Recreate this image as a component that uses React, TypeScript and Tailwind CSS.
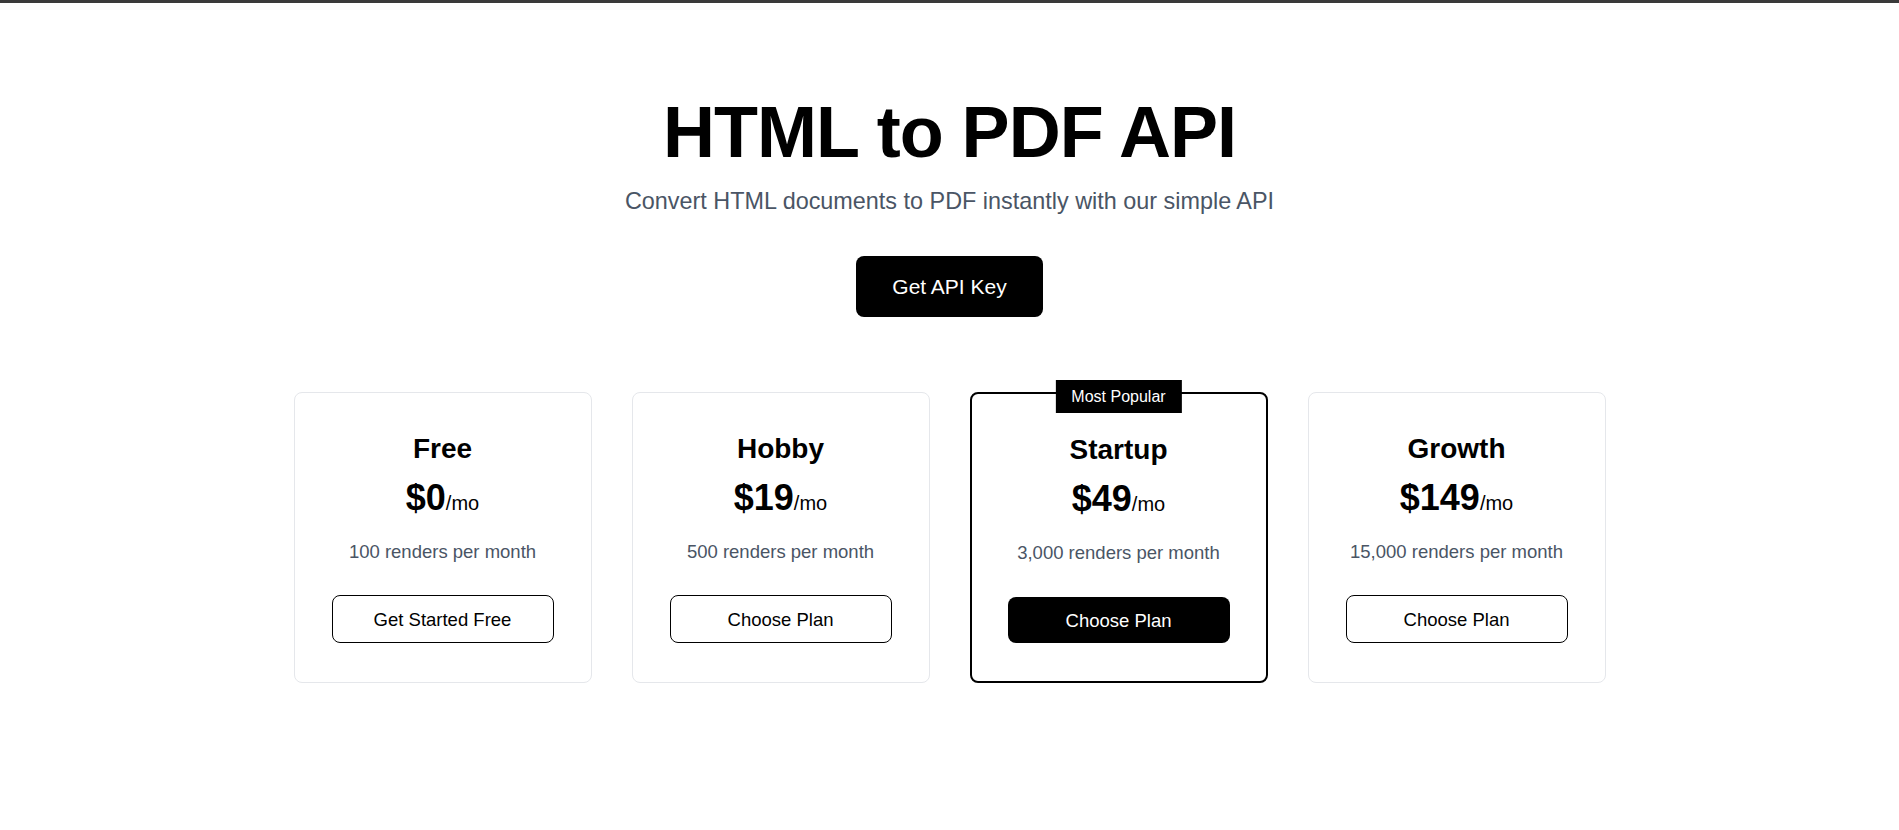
const plans = [
  { name: "Free", price: "$0", renders: "100 renders per month", cta: "Get Started Free", popular: false },
  { name: "Hobby", price: "$19", renders: "500 renders per month", cta: "Choose Plan", popular: false },
  { name: "Startup", price: "$49", renders: "3,000 renders per month", cta: "Choose Plan", popular: true },
  { name: "Growth", price: "$149", renders: "15,000 renders per month", cta: "Choose Plan", popular: false },
];

function PlanCard({ plan }: { plan: (typeof plans)[number] }) {
  return (
    <div
      className={
        plan.popular
          ? "relative flex flex-col items-center rounded-lg border-2 border-black bg-white px-[36px] pt-[39px] pb-[38px]"
          : "relative flex flex-col items-center rounded-lg border border-gray-200 bg-white px-[37px] pt-[39px] pb-[38px]"
      }
    >
      {plan.popular && (
        <span className="absolute top-[-14px] left-1/2 flex h-[33px] -translate-x-1/2 items-center bg-black px-4 text-[16px] text-white">
          Most Popular
        </span>
      )}
      <h3 className="text-[28px] leading-[34px] font-bold text-black">{plan.name}</h3>
      <div className="mt-[10px] leading-[43px] text-black">
        <span className="text-[36px] font-bold">{plan.price}</span>
        <span className="text-[20px]">/mo</span>
      </div>
      <p className="mt-[12px] text-[18.5px] leading-[27px] text-gray-600">{plan.renders}</p>
      {plan.popular ? (
        <button
          type="button"
          className="mt-[31px] h-[46px] w-full rounded-lg bg-black text-[18.5px] text-white"
        >
          {plan.cta}
        </button>
      ) : (
        <button
          type="button"
          className="mt-[30px] h-12 w-full rounded-lg border border-black bg-white text-[18.5px] text-black"
        >
          {plan.cta}
        </button>
      )}
    </div>
  );
}

export default function App() {
  return (
    <div className="min-h-screen bg-white font-['Liberation_Sans',Arial,sans-serif]">
      <div className="h-[3px] bg-[#3a3a3a]" />
      <main className="flex flex-col items-center pt-[86px]">
        <h1 className="text-[72px] leading-[1.2] font-bold tracking-[-1px] text-black">HTML to PDF API</h1>
        <p className="mt-[10px] text-[23.4px] leading-[33px] text-gray-600">
          Convert HTML documents to PDF instantly with our simple API
        </p>
        <button
          type="button"
          className="mt-[38px] rounded-lg bg-black px-9 py-[18px] text-[21px] leading-[25px] text-white"
        >
          Get API Key
        </button>
        <div className="mt-[75px] grid w-[1312px] grid-cols-4 gap-10">
          {plans.map((p) => (
            <PlanCard key={p.name} plan={p} />
          ))}
        </div>
      </main>
    </div>
  );
}
